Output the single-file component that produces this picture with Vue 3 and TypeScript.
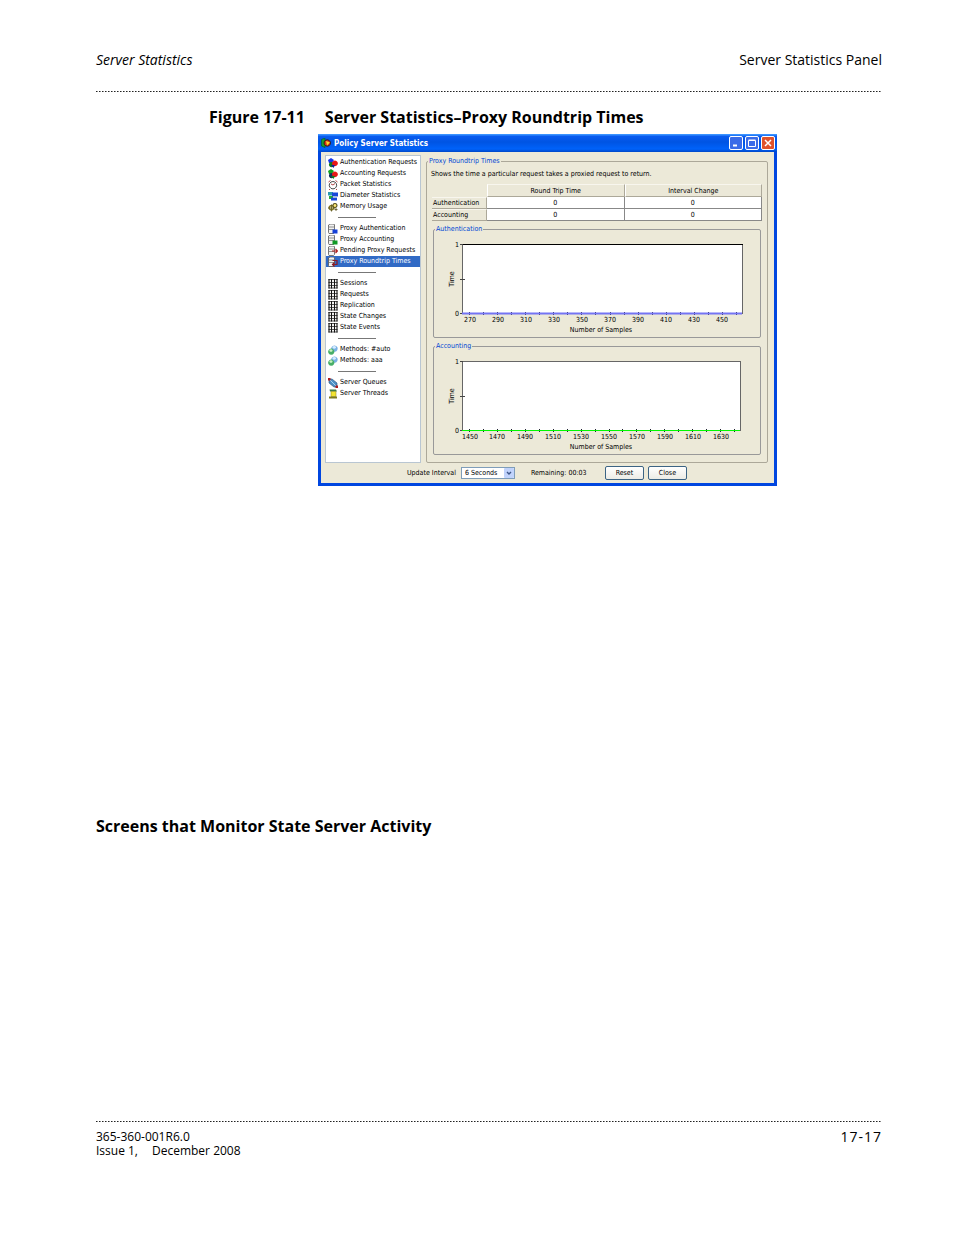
<script setup lang="ts">
import { ref } from 'vue'

interface Shape { d: string; fill?: string; stroke?: string; width?: number }
interface NavItem { label: string; icon: string }
interface Chart { title: string; right: number; first: number; step: number; color: string; line: number; frame: string }

const server: Shape[] = [
  { d: 'M0.5 1L2 0H6L6.5 1V8.5L5.5 9.5H1L0.5 8.5Z', fill: '#f2f2f2', stroke: '#555', width: 0.8 },
  { d: 'M1 3H6M1 5.5H6', stroke: '#777', width: 0.8 },
]

const icons: Record<string, Shape[]> = {
  authRequests: [
    { d: 'M0 2L3 0L6 2L4 5H1Z', fill: '#1738e8' },
    { d: 'M3.6 4A2.6 2.6 0 1 1 3.5 4Z', fill: '#127a20' },
    { d: 'M7 2.4A2.9 2.9 0 1 1 6.9 2.4Z', fill: '#e81818' },
    { d: 'M3 7H7L5.5 10Z', fill: '#12229b' },
  ],
  acctRequests: [
    { d: 'M0 2L3 0L6 2L4 5H1Z', fill: '#12a022' },
    { d: 'M3.6 4A2.6 2.6 0 1 1 3.5 4Z', fill: '#12305a' },
    { d: 'M7 2.4A2.9 2.9 0 1 1 6.9 2.4Z', fill: '#e81818' },
    { d: 'M3 7H7L5.5 10Z', fill: '#127a20' },
  ],
  clock: [
    { d: 'M5 1.5A3.7 3.7 0 1 1 4.9 1.5Z', fill: '#fff', stroke: '#333', width: 0.9 },
    { d: 'M0.5 2L2.5 0.5M7.5 0.5L9.5 2M5 5L7 3.5M5 5L3 4M2 9L1 10M8 9L9 10', stroke: '#a33', width: 0.9 },
  ],
  diameter: [
    { d: 'M0 1H5V4.5H0Z', fill: '#2c9ab0' },
    { d: 'M4 1.5H10V5.5H4Z', fill: '#1848d8' },
    { d: 'M1 5H5V8H1Z', fill: '#28a83c' },
    { d: 'M3 6.5H9V9.5H3Z', fill: '#1848d8' },
    { d: 'M5 5.5H9V6.5H5Z', fill: '#bcd' },
  ],
  gears: [
    { d: 'M3.5 3.5A2.3 2.3 0 1 1 3.4 3.5Z', fill: '#f3ecb0', stroke: '#80741e', width: 1.4 },
    { d: 'M7 1.5A2 2 0 1 1 6.9 1.5Z', fill: '#ffe976', stroke: '#5a5420', width: 1.2 },
    { d: 'M8 6V9M6.5 7.5H9.5M0 6H7M3.5 2.5V9.5', stroke: '#5a5420', width: 0.8 },
  ],
  proxyAuth: [...server, { d: 'M4.5 5.5H9.5V9.5H4.5Z', fill: '#1540d8' }],
  proxyAcct: [...server, { d: 'M4.5 5.5H9.5V9.5H4.5Z', fill: '#109a25' }],
  pending: [...server, { d: 'M4 5H9.5M7.5 3L9.5 5L7.5 7', stroke: '#b02020', width: 1.2 }],
  roundtrip: [...server, { d: 'M4.5 3.5H9V7.5H5M6.5 5.5L4.5 7.5L6.5 9.5', stroke: '#8a1c28', width: 1.2 }],
  grid: [
    { d: 'M0.5 0.5H9.5V9.5H0.5Z', fill: '#fff' },
    { d: 'M1 0V9.5M3.5 0V9.5M6.5 0V9.5M9 0V9.5', stroke: '#111', width: 1.1 },
    { d: 'M0.5 0.5H9.5M0.5 3.5H9.5M0.5 6.5H9.5M0.5 9H9.5', stroke: '#111', width: 0.7 },
  ],
  methods: [
    { d: 'M6.5 0.4A3.2 3.2 0 1 1 6.4 0.4Z', fill: '#79b0e4' },
    { d: 'M6.3 1A1.8 1.4 0 1 1 6.2 1Z', fill: '#d6eeff' },
    { d: 'M3.3 3.6A3.1 3.1 0 1 1 3.2 3.6Z', fill: '#47ae67' },
    { d: 'M3 4.2A1.6 1.3 0 1 1 2.9 4.2Z', fill: '#c9f0c4' },
  ],
  queues: [
    { d: 'M1 1H4L9 5V9H6L1 5Z', fill: '#4d8fc4', stroke: '#2a4f7a', width: 0.6 },
    { d: 'M2 2L8 8', stroke: '#a9d5f2', width: 1 },
    { d: 'M0 0H2.5V2.5H0ZM7.5 7.5H10V10H7.5Z', fill: '#b01c1c' },
  ],
  threads: [
    { d: 'M1.5 0.5H8L9 2.5H2Z', fill: '#3d7d44' },
    { d: 'M3 2.5H8V7.5H3Z', fill: '#f3e431', stroke: '#8a8010', width: 0.5 },
    { d: 'M1 7.5H9V9.5H1Z', fill: '#7d7a1c' },
  ],
  app: [
    { d: 'M0.5 1.5L4 0V9.5L0.5 8Z', fill: '#1c9a2c', stroke: '#052', width: 0.6 },
    { d: 'M6.3 1.8A3.2 3.2 0 1 1 6.2 1.8Z', fill: '#d7331c', stroke: '#210', width: 0.8 },
    { d: 'M5 3L9 4.5L6 7.5Z', fill: '#f6df2c' },
  ],
}

const groups: NavItem[][] = [
  [
    { label: 'Authentication Requests', icon: 'authRequests' },
    { label: 'Accounting Requests', icon: 'acctRequests' },
    { label: 'Packet Statistics', icon: 'clock' },
    { label: 'Diameter Statistics', icon: 'diameter' },
    { label: 'Memory Usage', icon: 'gears' },
  ],
  [
    { label: 'Proxy Authentication', icon: 'proxyAuth' },
    { label: 'Proxy Accounting', icon: 'proxyAcct' },
    { label: 'Pending Proxy Requests', icon: 'pending' },
    { label: 'Proxy Roundtrip Times', icon: 'roundtrip' },
  ],
  [
    { label: 'Sessions', icon: 'grid' },
    { label: 'Requests', icon: 'grid' },
    { label: 'Replication', icon: 'grid' },
    { label: 'State Changes', icon: 'grid' },
    { label: 'State Events', icon: 'grid' },
  ],
  [
    { label: 'Methods: #auto', icon: 'methods' },
    { label: 'Methods: aaa', icon: 'methods' },
  ],
  [
    { label: 'Server Queues', icon: 'queues' },
    { label: 'Server Threads', icon: 'threads' },
  ],
]

const charts: Chart[] = [
  { title: 'Authentication', right: 308, first: 270, step: 14.05, color: '#7474f4', line: 2, frame: '#000' },
  { title: 'Accounting', right: 306, first: 1450, step: 13.95, color: '#00f800', line: 1, frame: '#666' },
]

const selected = ref('Proxy Roundtrip Times')
const interval = ref('6 Seconds')
</script>

<template>
  <div class="page">
    <header class="page-head">
      <em>Server Statistics</em>
      <span>Server Statistics Panel</span>
    </header>
    <div class="dots"></div>

    <main>
      <h2 class="caption"><span>Figure 17-11</span><span>Server Statistics–Proxy Roundtrip Times</span></h2>

      <section class="window">
        <div class="titlebar">
          <svg class="icon" viewBox="0 0 10 10">
            <path v-for="(s, i) in icons.app" :key="i" :d="s.d" :fill="s.fill ?? 'none'" :stroke="s.stroke" :stroke-width="s.width" />
          </svg>
          <span class="title">Policy Server Statistics</span>
          <button class="tb" aria-label="Minimize"><svg viewBox="0 0 12 12"><path d="M3 8.5H7" stroke="#fff" stroke-width="2" /></svg></button>
          <button class="tb" aria-label="Maximize"><svg viewBox="0 0 12 12"><path d="M2.5 3.5H9.5V9.5H2.5ZM2.5 3H9.5" fill="none" stroke="#fff" /></svg></button>
          <button class="tb close" aria-label="Close window"><svg viewBox="0 0 12 12"><path d="M3 3L9 9M9 3L3 9" stroke="#fff" stroke-width="1.5" /></svg></button>
        </div>

        <div class="body">
          <nav class="list">
            <ul v-for="(group, g) in groups" :key="g">
              <li v-for="item in group" :key="item.label">
                <button class="item" :class="{ active: item.label === selected }" @click="selected = item.label">
                  <svg class="icon" viewBox="0 0 10 10">
                    <path v-for="(s, i) in icons[item.icon]" :key="i" :d="s.d" :fill="s.fill ?? 'none'" :stroke="s.stroke" :stroke-width="s.width" />
                  </svg>
                  {{ item.label }}
                </button>
              </li>
            </ul>
          </nav>

          <fieldset class="panel">
            <legend>Proxy Roundtrip Times</legend>
            <p class="desc">Shows the time a particular request takes a proxied request to return.</p>
            <table>
              <thead>
                <tr><td></td><th scope="col">Round Trip Time</th><th scope="col">Interval Change</th></tr>
              </thead>
              <tbody>
                <tr><th scope="row">Authentication</th><td>0</td><td>0</td></tr>
                <tr><th scope="row">Accounting</th><td>0</td><td>0</td></tr>
              </tbody>
            </table>

            <fieldset v-for="c in charts" :key="c.title" class="chart">
              <legend>{{ c.title }}</legend>
              <svg viewBox="0 0 326 104" role="img" :aria-label="c.title + ' times'">
                <rect x="28.5" y="11.5" :width="c.right - 28" height="69" fill="#fff" stroke="#666" />
                <path :d="`M28 11.5H${c.right + 1}`" :stroke="c.frame" />
                <path d="M26 11.5H29M26 46.5H31M26 80.5H29" stroke="#444" />
                <path v-for="n in 20" :key="n" :d="`M${Math.round(35 + (n - 1) * c.step) + 0.5} 79V82`" stroke="#223" />
                <path :d="`M28 80.5H${c.right}`" :stroke="c.color" :stroke-width="c.line" />
                <text x="25" y="14" text-anchor="end">1</text>
                <text x="25" y="83" text-anchor="end">0</text>
                <text v-for="n in 10" :key="n" :x="Math.round(35.5 + (n - 1) * 2 * c.step)" y="89" text-anchor="middle">{{ c.first + (n - 1) * 20 }}</text>
                <text x="167" y="99" text-anchor="middle">Number of Samples</text>
                <text transform="translate(20 46) rotate(-90)" text-anchor="middle">Time</text>
              </svg>
            </fieldset>
          </fieldset>
        </div>

        <div class="actions">
          <label for="interval">Update Interval</label>
          <span class="combo">
            <select id="interval" v-model="interval">
              <option>6 Seconds</option>
              <option>10 Seconds</option>
              <option>30 Seconds</option>
            </select>
            <svg viewBox="0 0 10 10"><rect width="10" height="10" rx="1" fill="#c1d3fb" /><path d="M3 4L5 6L7 4" fill="none" stroke="#3f5788" stroke-width="1.4" /></svg>
          </span>
          <span class="remaining">Remaining: 00:03</span>
          <button class="push">Reset</button>
          <button class="push">Close</button>
        </div>
      </section>

      <h2 class="section">Screens that Monitor State Server Activity</h2>
    </main>

    <footer>
      <div class="dots"></div>
      <div class="foot">
        <div>365-360-001R6.0<br />Issue 1,<span class="date">December 2008</span></div>
        <span class="pageno">17-17</span>
      </div>
    </footer>
  </div>
</template>

<style>
body { margin: 0; background: #fff; }
</style>

<style scoped>
* { box-sizing: border-box; }
.page {
  display: flex;
  flex-direction: column;
  min-height: 100vh;
  padding: 50px 72px 77px 96px;
  font-family: "Open Sans", "Noto Sans", sans-serif;
  font-size: 14px;
  color: #000;
}
.page-head { display: flex; justify-content: space-between; line-height: 20px; padding-bottom: 21px; }
.dots { height: 1px; background: repeating-linear-gradient(90deg, #222 0 1px, #888 1px 2px, #fff 2px 3px); }
h2 { margin: 0; font-size: 16px; font-weight: 700; line-height: 22px; }
.caption { display: flex; gap: 20px; margin: 14px 0 6px 113px; }
.window {
  margin: 0 105px 0 222px;
  border: 3px solid #0046e0;
  border-top: 0;
  background: #ece9d8;
  font-family: "DejaVu Sans Condensed", "DejaVu Sans", sans-serif;
  font-size: 7px;
  line-height: 11px;
}
.titlebar {
  display: flex;
  align-items: center;
  gap: 2px;
  height: 18px;
  margin: 0 -3px;
  padding: 0 2px 0 3px;
  background: linear-gradient(#3a93ff 0 1px, #0a5cf0 2px, #0054e3 8px, #0062fa 15px, #0048c8 18px);
}
.title { flex: 1; padding-left: 1px; color: #fff; font-weight: 700; font-size: 8px; }
button, select { font: inherit; color: inherit; padding: 0; margin: 0; }
.tb { width: 14px; height: 14px; border: 1px solid #fff; border-radius: 2px; background: #3a6be8; }
.tb svg { display: block; width: 12px; height: 12px; }
.close { background: #e0522c; }
.icon { width: 10px; height: 10px; flex: none; }
.body { display: grid; grid-template-columns: 96px 1fr; gap: 5px; padding: 3px 6px 0 4px; }
.list { background: #fff; border: 1px solid #b9c6d2; padding-top: 1px; }
ul { list-style: none; margin: 0; padding: 0; }
li { height: 11px; }
ul + ul::before { content: ""; display: block; width: 38px; height: 1px; margin: 5px 0 5px 12px; background: #777; }
.item {
  display: flex;
  align-items: center;
  gap: 2px;
  width: 100%;
  height: 11px;
  padding-left: 2px;
  border: 0;
  background: none;
  line-height: 13px;
  text-align: left;
  white-space: nowrap;
}
.item.active { background: #316ac5; color: #fff; }
fieldset { min-width: 0; margin: 0; border: 1px solid #aca899; border-radius: 2px; }
legend { padding: 0 1px; margin: 0; line-height: 8px; color: #0046d5; }
.panel { margin-top: 2px; padding: 4px 6px 7px; }
.panel > legend { margin-left: -5px; }
.desc { margin: 0 0 5px -2px; line-height: 10px; white-space: nowrap; }
table { width: calc(100% + 2px); margin-left: -1px; table-layout: fixed; border-collapse: separate; border-spacing: 0; }
th, td { height: 12px; padding: 0; line-height: 10px; font-weight: 400; text-align: center; }
tr > :first-child { width: 55px; text-align: left; padding-left: 1px; }
th { border-right: 1px solid #aca899; border-bottom: 1px solid #aca899; border-top: 1px solid #f8f6ee; background: #ebe8d8; }
thead th { height: 13px; border-left: 1px solid #fff; }
tbody td { background: #fff; border-right: 1px solid #888; border-bottom: 1px solid #888; }
.chart { margin-top: 4px; padding: 0; border-color: #999; }
.chart legend { margin-left: 1px; }
.chart svg { display: block; width: 100%; }
.actions { display: flex; align-items: center; height: 20px; padding-left: 86px; white-space: nowrap; }
.combo { position: relative; width: 54px; height: 12px; margin-left: 5px; }
.combo select { appearance: none; display: block; width: 100%; height: 12px; padding-left: 3px; border: 1px solid #7f9db9; border-radius: 0; background: #fff; line-height: 10px; }
.combo svg { position: absolute; right: 1px; top: 1px; width: 10px; height: 10px; pointer-events: none; }
.remaining { margin-left: 16px; width: 74px; }
.push { width: 39px; height: 14px; margin-right: 4px; border: 1px solid #3c6484; border-radius: 2px; background: linear-gradient(#fff, #ecebe5); line-height: 12px; }
.section { margin-top: 329px; }
footer { margin-top: auto; }
.foot { display: flex; justify-content: space-between; padding-top: 8px; font-size: 12px; line-height: 14px; }
.date { margin-left: 14px; }
.pageno { font-size: 14px; letter-spacing: 1px; }
</style>
